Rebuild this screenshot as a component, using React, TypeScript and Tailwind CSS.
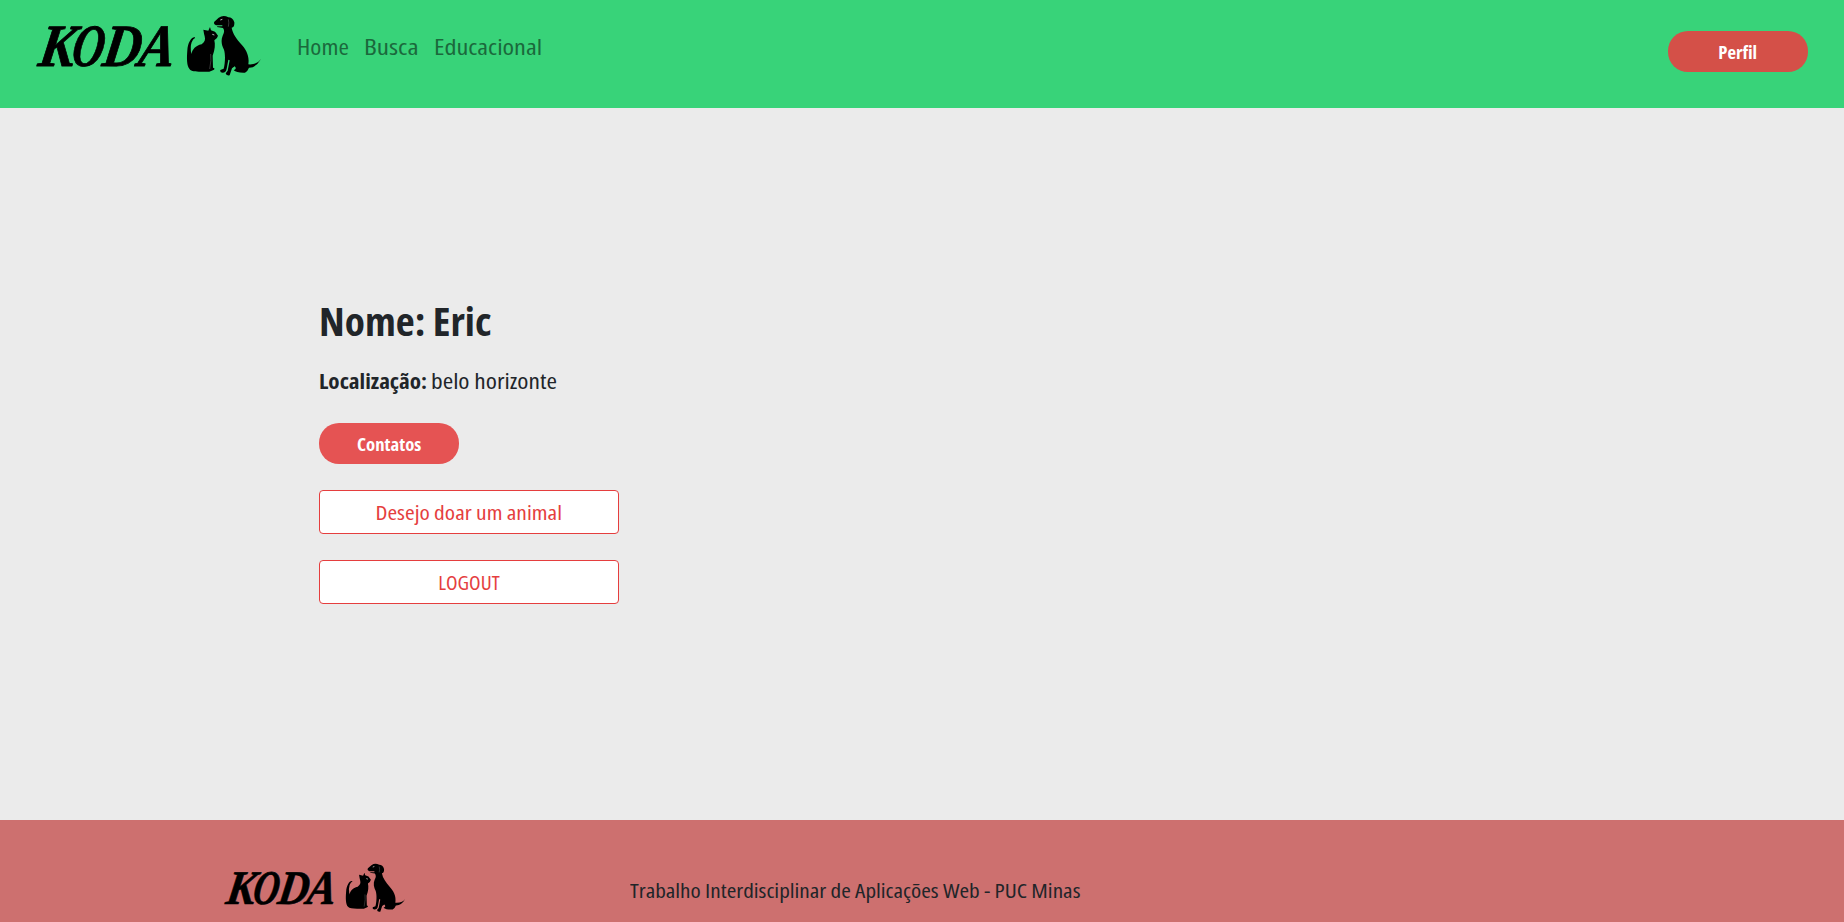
function Logo({ className }: { className: string }) {
  return (
    <svg viewBox="0 0 228 64" className={className} role="img" aria-label="Koda">
      <g transform="translate(1 51.5) skewX(-9)" fontFamily="'Liberation Serif', serif" fontStyle="italic" fontWeight="700" fontSize="60" stroke="#000" strokeWidth="0.8" strokeLinejoin="round">
        <text x="0" y="0" textLength="36" lengthAdjust="spacingAndGlyphs">K</text>
        <text x="33" y="0" textLength="32" lengthAdjust="spacingAndGlyphs">O</text>
        <text x="64" y="0" textLength="38" lengthAdjust="spacingAndGlyphs">D</text>
        <text x="100" y="0" textLength="36" lengthAdjust="spacingAndGlyphs">A</text>
      </g>
      <g transform="translate(144 -4) scale(.33333)">
        <path d="M45 82C35 79 23 98 22 121C20 145 20 168 29 178C36 187 58 185 88 185L102 179Q106 174 99 173L98 137C105 119 106 103 103 91Q112 86 114 77Q109 70 105 65L93 61L90 51L85 62L70 59Q72 72 74 79C77 90 74 96 65 103C46 107 38 118 34 132Q30 111 35 97Q39 87 45 84Z" />
        <path d="M111 51L129 54Q136 64 128 77C122 91 125 106 132 119C137 135 135 162 131 176L121 180Q119 188 128 188Q138 188 140 176L145 149L149 151L143 182L137 190Q138 198 149 196L156 175L164 169Q172 177 161 181Q170 189 195 188Q204 182 207 173Q227 174 243 147Q231 165 205 163C209 137 198 118 183 102C171 88 158 72 155 53Q164 52 163 37Q158 22 145 22Q130 14 116 23L103 35Q99 42 108 46L127 46L127 49L112 49Z" />
        <path d="M92 132Q95 149 89 177M145 28Q148 38 145 50" fill="none" stroke="#555" strokeWidth="2" />
        <path d="M121 30L127 28M97 73L103 75" stroke="#bbb" strokeWidth="3" />
      </g>
    </svg>
  );
}

export default function App() {
  return (
    <div className="flex h-[922px] flex-col overflow-hidden bg-[#ebebeb] font-['Open_Sans',sans-serif] text-[#212529] [font-stretch:75%]">
      <header className="flex h-[108px] shrink-0 items-start justify-between bg-[#38d379] pl-9 pr-9">
        <div className="flex">
          <Logo className="mt-[14px] h-16 w-[228px] overflow-visible" />
          <nav className="ml-[33px] mt-[31px] flex text-[21px] leading-8 text-[#1b693c]">
            <a className="w-[67px] origin-left scale-x-[1.2]">Home</a>
            <a className="w-[70px] origin-left scale-x-[1.29]">Busca</a>
            <a className="origin-left scale-x-[1.25]">Educacional</a>
          </nav>
        </div>
        <button className="mt-[31px] h-[41px] w-[140px] rounded-[20px] bg-[#d45048] pt-0.5 text-[17px] font-bold text-white"><span className="inline-block scale-x-[1.1]">Perfil</span></button>
      </header>
      <main className="flex flex-1 flex-col items-start pl-[319px] pt-[188px]">
        <h1 className="h-[54px] origin-left scale-x-[1.06] text-[39px] font-bold leading-[50px]">Nome: Eric</h1>
        <p className="mt-4 flex h-8 text-[21px] leading-[30px]">
          <b className="w-[112px] origin-left scale-x-[1.1]">Localização:</b>
          <span className="origin-left scale-x-[1.21]">belo horizonte</span>
        </p>
        <button className="mt-[25px] h-[41px] w-[140px] rounded-[20px] bg-[#e55353] pt-0.5 text-[17px] font-bold text-white"><span className="inline-block scale-x-[1.1]">Contatos</span></button>
        <button className="mt-[26px] h-11 w-[300px] rounded border border-[#e53e3e] bg-white pt-px text-[20px] text-[#e53e3e]"><span className="inline-block scale-x-[1.17]">Desejo doar um animal</span></button>
        <button className="mt-[26px] h-11 w-[300px] rounded border border-[#e53e3e] bg-white pt-px text-[20px] text-[#e53e3e]"><span className="inline-block scale-x-[1.06]">LOGOUT</span></button>
      </main>
      <footer className="flex h-[102px] shrink-0 items-start bg-[#cd706f] pl-[224px]">
        <Logo className="mt-[42px] h-[52px] w-[184px] overflow-visible" />
        <p className="ml-[222px] mt-[55px] origin-left scale-x-[1.19] text-[19.5px] leading-8">Trabalho Interdisciplinar de Aplicações Web - PUC Minas</p>
      </footer>
    </div>
  );
}
